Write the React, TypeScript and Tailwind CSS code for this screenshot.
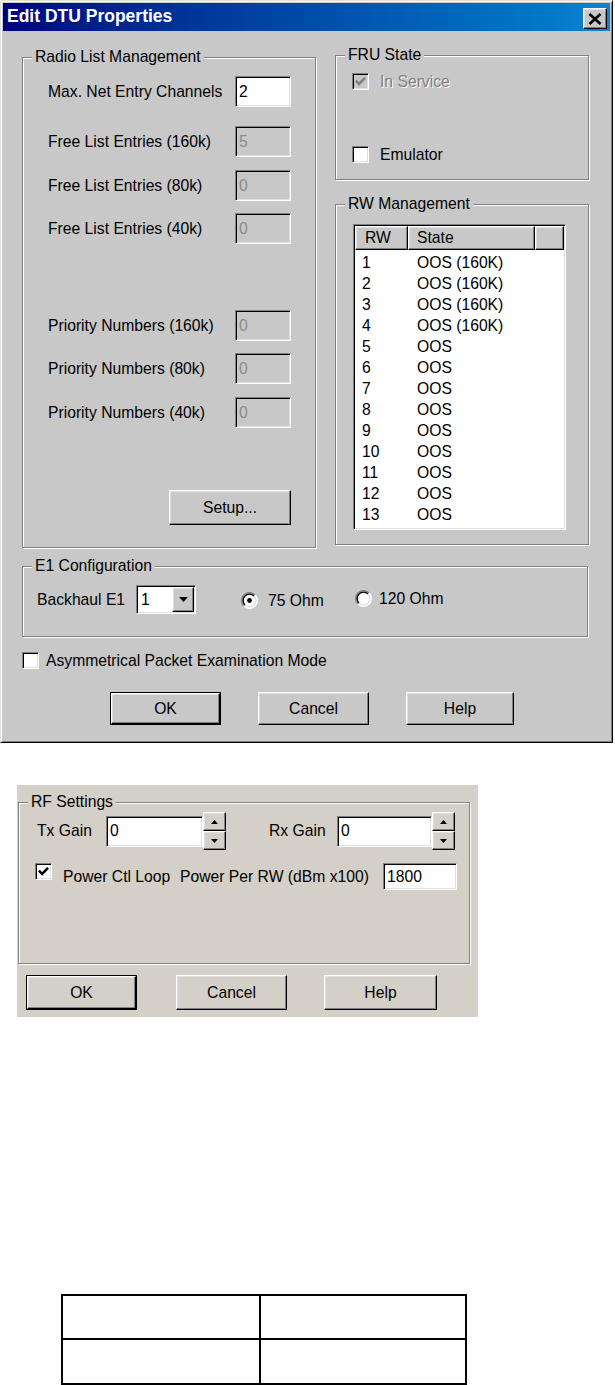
import React from "react";

type Kids = { className?: string; children?: React.ReactNode };

// classic 3d edges
function Raised({ className = "", children }: Kids) {
  return (
    <div
      className={`flex items-center justify-center border border-t-white border-l-white border-r-black border-b-black shadow-[inset_-1px_-1px_0_#808080,inset_1px_1px_0_#dfdfdf] ${className}`}
    >
      {children}
    </div>
  );
}

function Sunken({ className = "", children }: Kids) {
  return (
    <div
      className={`border border-t-[#808080] border-l-[#808080] border-r-white border-b-white shadow-[inset_1px_1px_0_#000,inset_-1px_-1px_0_#dfdfdf] ${className}`}
    >
      {children}
    </div>
  );
}

function Btn({ label, def, className = "" }: { label: string; def?: boolean; className?: string }) {
  if (def) {
    return (
      <div className={`border border-black ${className}`}>
        <Raised className="w-full h-full">{label}</Raised>
      </div>
    );
  }
  return <Raised className={className}>{label}</Raised>;
}

function Group({ title, bg, className = "", children }: Kids & { title: string; bg: string }) {
  return (
    <div className={`relative border border-[#808080] shadow-[inset_1px_1px_0_#fff,1px_1px_0_#fff] ${className}`}>
      <span className={`absolute left-[9px] top-[-11px] px-[3px] leading-[20px] ${bg}`}>{title}</span>
      {children}
    </div>
  );
}

function CheckBox({ checked, disabled }: { checked?: boolean; disabled?: boolean }) {
  return (
    <Sunken
      className={`w-[17px] h-[17px] shrink-0 flex items-center justify-center ${disabled ? "bg-[#c8c8c8]" : "bg-white"}`}
    >
      {checked && (
        <svg width="11" height="11" viewBox="0 0 7 7">
          <path d="M0.6 3 L2.6 5 L6.4 1.2" fill="none" stroke={disabled ? "#808080" : "#000"} strokeWidth="1.6" />
        </svg>
      )}
    </Sunken>
  );
}

function Radio({ on }: { on?: boolean }) {
  return (
    <svg width="17" height="17" viewBox="0 0 12 12" className="shrink-0">
      <circle cx="6" cy="6" r="5.5" fill="#fff" />
      <path d="M9.9 2.1 A5.5 5.5 0 0 0 2.1 9.9" fill="none" stroke="#808080" strokeWidth="1" />
      <path d="M2.1 9.9 A5.5 5.5 0 0 0 9.9 2.1" fill="none" stroke="#fff" strokeWidth="1" />
      <path d="M9.2 2.8 A4.5 4.5 0 0 0 2.8 9.2" fill="none" stroke="#000" strokeWidth="1" />
      <path d="M2.8 9.2 A4.5 4.5 0 0 0 9.2 2.8" fill="none" stroke="#dfdfdf" strokeWidth="1" />
      {on && <circle cx="6" cy="6" r="1.7" fill="#000" />}
    </svg>
  );
}

function Arrow({ up, big }: { up?: boolean; big?: boolean }) {
  return (
    <svg width={big ? 9 : 7} height={big ? 5 : 4} viewBox="0 0 7 4">
      <path d={up ? "M0 4 L3.5 0 L7 4 Z" : "M0 0 L7 0 L3.5 4 Z"} fill="#000" />
    </svg>
  );
}

function Spinner({ bg }: { bg: string }) {
  return (
    <div className="flex flex-col w-[23px] h-[38px]">
      <Raised className={`h-[19px] ${bg}`}>
        <Arrow up />
      </Raised>
      <Raised className={`h-[19px] ${bg}`}>
        <Arrow />
      </Raised>
    </div>
  );
}

function FieldRow({ label, value, disabled, mt }: { label: string; value: string; disabled?: boolean; mt: string }) {
  return (
    <div className={`flex items-center justify-between ${mt}`}>
      <span>{label}</span>
      <Sunken
        className={`w-[56px] h-[31px] flex items-center pl-[3px] ${disabled ? "bg-[#c8c8c8] text-[#8c8c8c]" : "bg-white"}`}
      >
        {value}
      </Sunken>
    </div>
  );
}

const rwRows = [
  ["1", "OOS (160K)"],
  ["2", "OOS (160K)"],
  ["3", "OOS (160K)"],
  ["4", "OOS (160K)"],
  ["5", "OOS"],
  ["6", "OOS"],
  ["7", "OOS"],
  ["8", "OOS"],
  ["9", "OOS"],
  ["10", "OOS"],
  ["11", "OOS"],
  ["12", "OOS"],
  ["13", "OOS"],
];

function EditDialog() {
  return (
    <div className="w-[613px] h-[743px] bg-[#c8c8c8] border border-t-[#dfdfdf] border-l-[#dfdfdf] border-r-black border-b-black shadow-[inset_1px_1px_0_#fff,inset_-1px_-1px_0_#808080] p-[2px] flex flex-col">
      {/* title bar */}
      <div className="h-[28px] bg-linear-to-r from-[#000080] to-[#1084d0] flex items-center justify-between pl-[4px] pr-[3px]">
        <span className="text-white font-bold text-[17.5px]">Edit DTU Properties</span>
        <Raised className="w-[24px] h-[21px] bg-[#c8c8c8] mt-[3px]">
          <svg width="14" height="12" viewBox="0 0 14 12">
            <path d="M1.5 1 L12.5 11 M12.5 1 L1.5 11" stroke="#000" strokeWidth="2.6" />
          </svg>
        </Raised>
      </div>

      <div className="flex flex-col pl-[19px] pt-[26px]">
        <div className="flex items-start">
          <Group title="Radio List Management" bg="bg-[#c8c8c8]" className="w-[294px] h-[491px] flex flex-col pl-[25px] pr-[24px]">
            <FieldRow label="Max. Net Entry Channels" value="2" mt="mt-[18px]" />
            <FieldRow label="Free List Entries (160k)" value="5" disabled mt="mt-[19px]" />
            <FieldRow label="Free List Entries (80k)" value="0" disabled mt="mt-[13px]" />
            <FieldRow label="Free List Entries (40k)" value="0" disabled mt="mt-[12px]" />
            <FieldRow label="Priority Numbers (160k)" value="0" disabled mt="mt-[66px]" />
            <FieldRow label="Priority Numbers (80k)" value="0" disabled mt="mt-[12px]" />
            <FieldRow label="Priority Numbers (40k)" value="0" disabled mt="mt-[13px]" />
            <Btn label="Setup..." className="self-end mt-[62px] w-[122px] h-[35px]" />
          </Group>

          <div className="ml-[19px] -mt-[2px] flex flex-col w-[254px]">
            <Group title="FRU State" bg="bg-[#c8c8c8]" className="h-[125px] flex flex-col pl-[16px]">
              <div className="flex items-center gap-[11px] mt-[17px]">
                <CheckBox checked disabled />
                <span className="text-[#808080] [text-shadow:1px_1px_0_#fff]">In Service</span>
              </div>
              <div className="flex items-center gap-[11px] mt-[56px]">
                <CheckBox />
                <span>Emulator</span>
              </div>
            </Group>

            <Group title="RW Management" bg="bg-[#c8c8c8]" className="mt-[24px] h-[341px] pl-[17px] pt-[19px]">
              <Sunken className="w-[213px] h-[306px] bg-white flex flex-col p-[1px]">
                <div className="flex h-[24px] bg-[#c8c8c8]">
                  <Raised className="w-[53px] justify-start pl-[9px]">RW</Raised>
                  <Raised className="w-[127px] justify-start pl-[8px]">State</Raised>
                  <Raised className="flex-1" />
                </div>
                <div className="flex flex-col pt-[2px]">
                  {rwRows.map(([n, s]) => (
                    <div key={n} className="flex items-center h-[21px]">
                      <span className="w-[62px] pl-[7px]">{n}</span>
                      <span>{s}</span>
                    </div>
                  ))}
                </div>
              </Sunken>
            </Group>
          </div>
        </div>

        <Group title="E1 Configuration" bg="bg-[#c8c8c8]" className="mt-[18px] w-[566px] h-[71px] pl-[14px] pt-[18px]">
          <div className="flex items-center h-[29px]">
            <span className="w-[99px]">Backhaul E1</span>
            <Sunken className="w-[60px] h-[29px] bg-white flex p-[1px]">
              <span className="flex-1 flex items-center pl-[3px]">1</span>
              <Raised className="w-[22px] h-full bg-[#c8c8c8]">
                <Arrow big />
              </Raised>
            </Sunken>
            <div className="ml-[45px] flex items-center gap-[10px] w-[114px] mt-[2px]">
              <Radio on />
              <span>75 Ohm</span>
            </div>
            <div className="flex items-center gap-[7px] -mt-[2px]">
              <Radio />
              <span>120 Ohm</span>
            </div>
          </div>
        </Group>

        <div className="mt-[15px] flex items-center gap-[7px]">
          <CheckBox />
          <span>Asymmetrical Packet Examination Mode</span>
        </div>

        <div className="mt-[23px] ml-[88px] flex">
          <Btn label="OK" def className="w-[111px] h-[33px]" />
          <Btn label="Cancel" className="ml-[37px] w-[111px] h-[33px]" />
          <Btn label="Help" className="ml-[37px] w-[108px] h-[33px]" />
        </div>
      </div>
    </div>
  );
}

function RfPanel() {
  return (
    <div className="ml-[17px] mt-[42px] w-[461px] h-[232px] bg-[#d4d0c8] flex flex-col pl-[1px] pt-[17px]">
      <Group title="RF Settings" bg="bg-[#d4d0c8]" className="w-[452px] h-[162px] flex flex-col pl-[18px]">
        <div className="flex items-center h-[38px] mt-[9px]">
          <span className="w-[69px]">Tx Gain</span>
          <Sunken className="w-[97px] h-[31px] bg-white flex items-center pl-[3px]">0</Sunken>
          <Spinner bg="bg-[#d4d0c8]" />
          <span className="ml-[43px] w-[68px]">Rx Gain</span>
          <Sunken className="w-[95px] h-[31px] bg-white flex items-center pl-[3px]">0</Sunken>
          <Spinner bg="bg-[#d4d0c8]" />
        </div>
        <div className="flex items-center h-[27px] mt-[13px] -ml-[2px]">
          <div className="self-start">
            <CheckBox checked />
          </div>
          <span className="ml-[11px] w-[117px]">Power Ctl Loop</span>
          <span className="w-[203px]">Power Per RW (dBm x100)</span>
          <Sunken className="w-[74px] h-[27px] bg-white flex items-center pl-[3px]">1800</Sunken>
        </div>
      </Group>
      <div className="mt-[11px] ml-[8px] flex">
        <Btn label="OK" def className="w-[111px] h-[35px]" />
        <Btn label="Cancel" className="ml-[39px] w-[111px] h-[35px]" />
        <Btn label="Help" className="ml-[37px] w-[113px] h-[35px]" />
      </div>
    </div>
  );
}

function BlankTable() {
  return (
    <div className="ml-[61px] mt-[277px] w-[406px] h-[91px] border-2 border-black grid grid-cols-[198px_1fr] grid-rows-[44px_1fr]">
      <div className="border-r-2 border-b-2 border-black" />
      <div className="border-b-2 border-black" />
      <div className="border-r-2 border-black" />
      <div />
    </div>
  );
}

export default function App() {
  return (
    <div className="font-['Liberation_Sans',Arial,sans-serif] text-[15.7px] leading-none text-black bg-white w-[615px] h-[1385px] overflow-hidden">
      <EditDialog />
      <RfPanel />
      <BlankTable />
    </div>
  );
}
